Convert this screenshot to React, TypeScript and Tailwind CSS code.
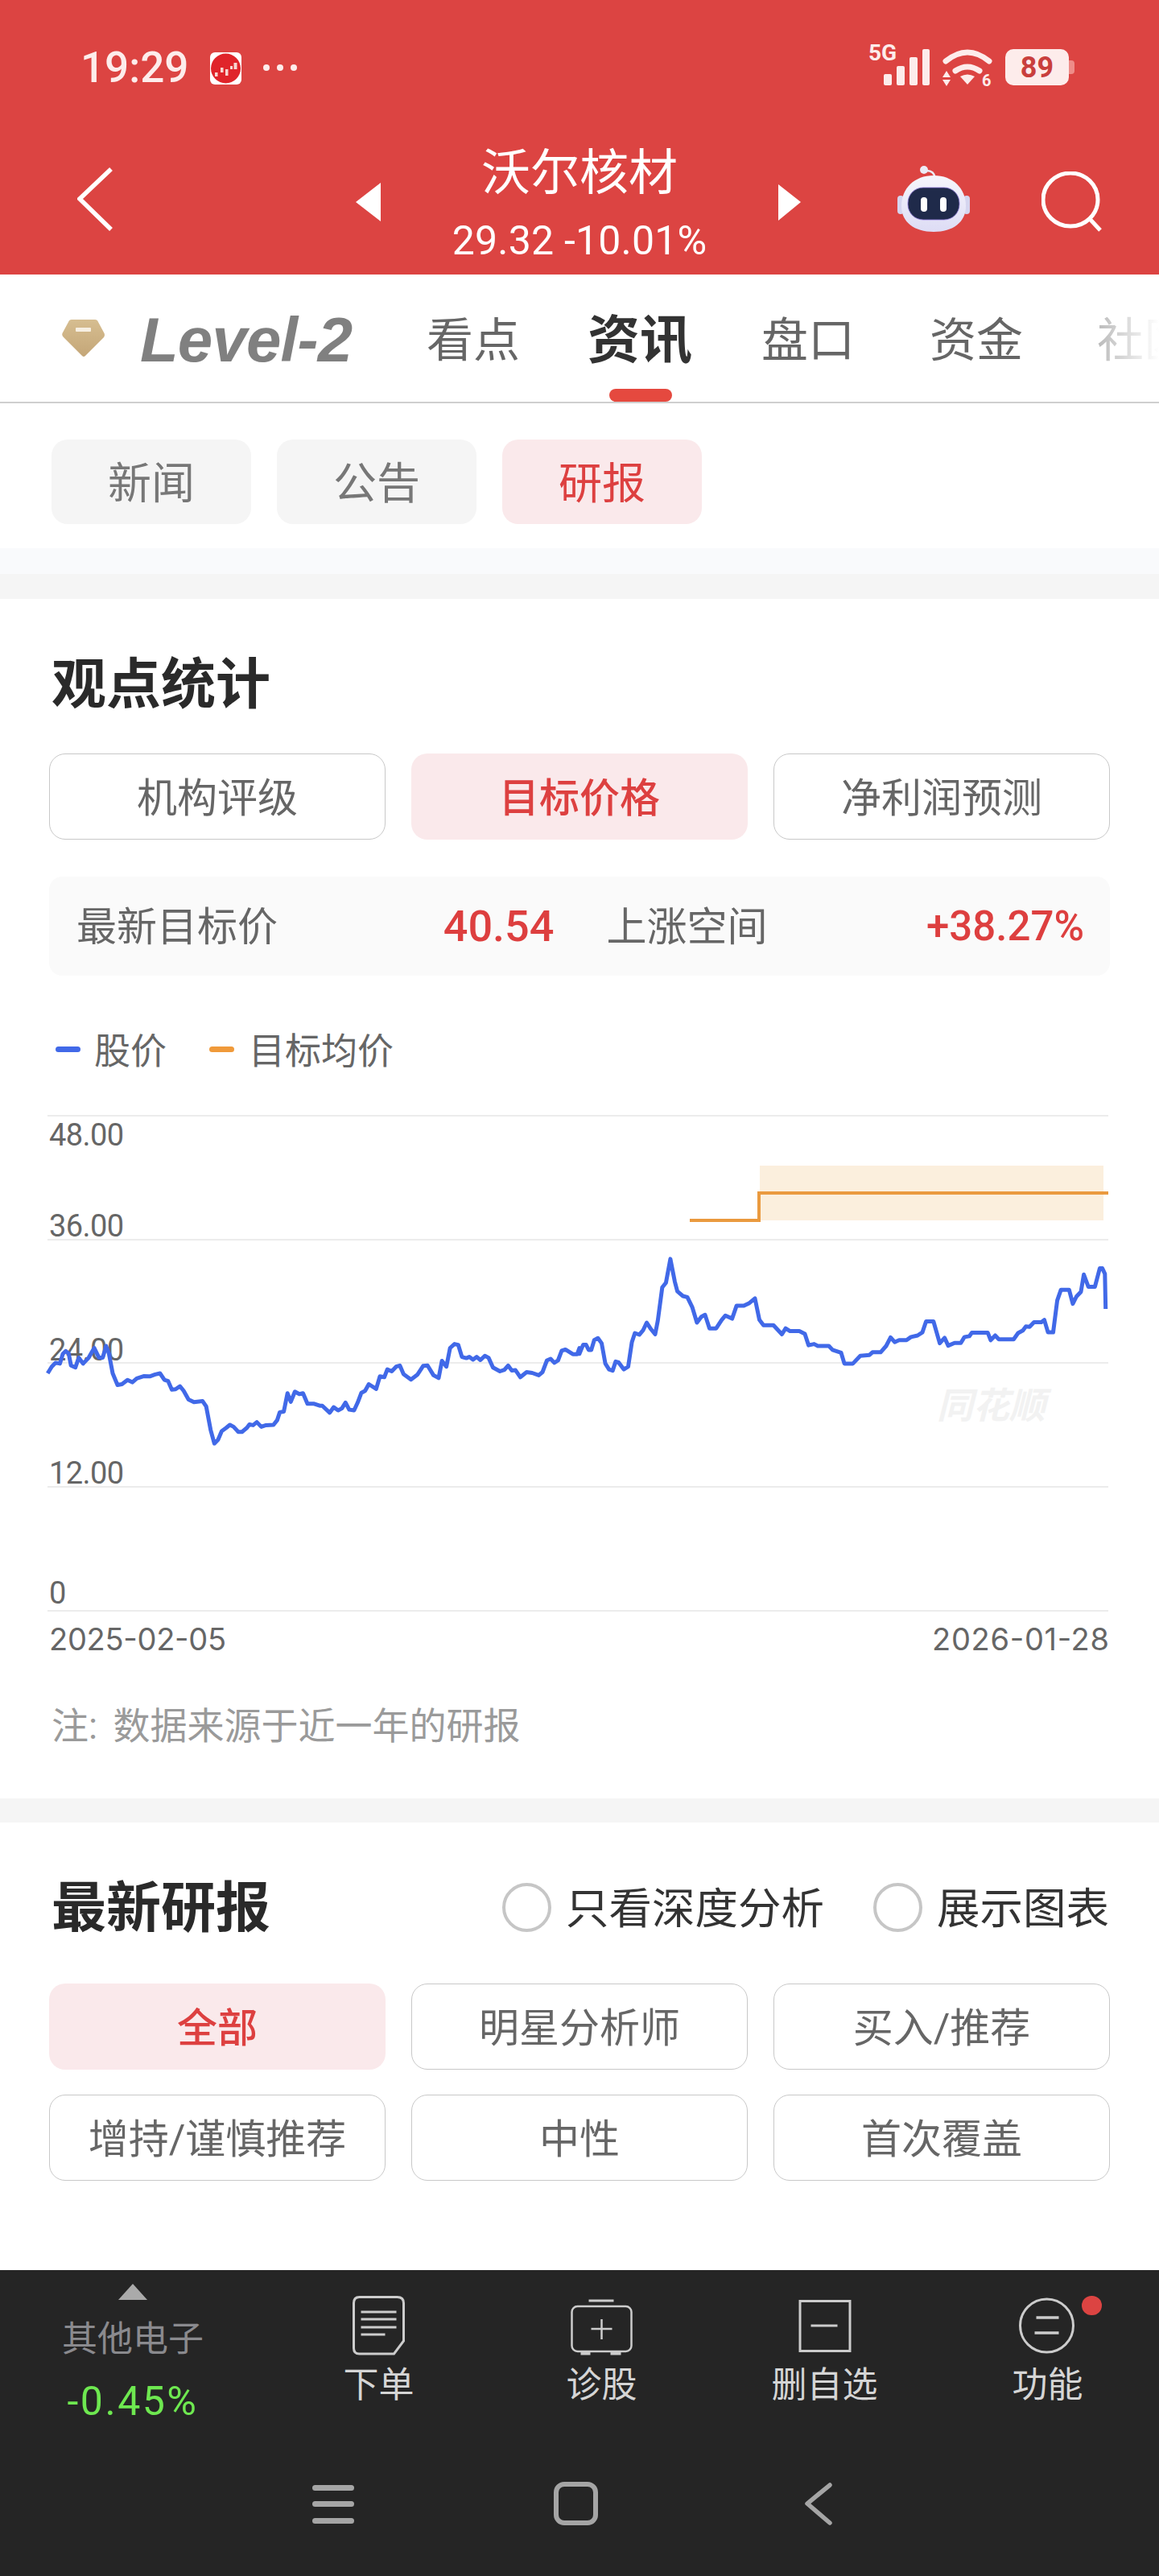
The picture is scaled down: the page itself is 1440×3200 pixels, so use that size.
import React from "react";

const LEFT: number[][] = [[129,755],[140,738],[150,728],[162,730],[170,705],[178,698],[186,705],[192,735],[204,740],[213,715],[225,730],[240,715],[255,690],[268,715],[278,715],[287,685],[295,705],[305,755],[318,785],[330,783],[345,772],[358,778],[370,768],[390,762],[405,763],[420,758],[433,755],[445,772],[455,775],[465,797],[475,796],[487,788],[497,800],[510,822],[525,829],[548,826],[558,840],[570,900],[580,935],[590,925],[600,903],[612,895],[622,887],[632,892],[645,905],[655,905],[668,895],[675,886],[685,888],[695,880],[707,892],[720,888],[740,887],[750,875],[757,855],[768,853],[778,806],[787,828],[798,802],[810,808],[820,806],[832,833],[850,833],[865,838],[872,838],[892,856],[903,842],[915,850],[925,845],[935,830],[945,848],[958,850],[968,830],[978,805],[988,800],[998,783],[1018,795],[1028,763],[1040,765],[1048,745],[1060,750],[1072,738],[1082,735],[1092,757],[1112,771],[1130,758],[1145,736],[1157,735],[1173,760],[1187,767],[1196,723],[1208,738],[1218,690],[1230,680],[1240,682],[1250,713],[1262,716],[1270,713],[1280,720],[1290,713],[1300,721],[1312,710],[1322,715],[1334,740],[1353,750],[1365,746],[1375,735],[1385,748],[1395,747],[1408,765],[1425,752],[1440,754],[1458,760],[1468,752],[1480,722],[1490,718],[1500,728],[1510,722],[1520,697],[1530,694],[1550,706],[1562,706],[1568,690]];
const RIGHT: number[][] = [[0,705],[10,682],[18,682],[25,695],[32,695],[40,670],[50,665],[60,678],[70,730],[80,745],[90,748],[98,725],[106,727],[120,745],[132,738],[142,675],[150,652],[162,656],[172,645],[182,625],[192,640],[205,655],[212,620],[224,535],[234,523],[246,462],[258,520],[265,545],[280,557],[292,560],[305,585],[318,625],[330,610],[340,605],[352,640],[370,640],[385,618],[395,607],[413,615],[425,582],[445,582],[460,575],[475,563],[487,618],[498,632],[525,632],[548,655],[558,640],[570,647],[595,647],[610,654],[620,683],[635,680],[645,685],[675,685],[685,695],[708,702],[717,730],[740,730],[760,710],[785,708],[793,701],[815,701],[830,685],[842,663],[853,675],[865,670],[885,670],[897,662],[915,658],[928,650],[938,622],[958,622],[975,678],[988,664],[998,684],[1015,677],[1032,677],[1042,662],[1055,660],[1062,651],[1105,651],[1113,670],[1125,658],[1135,668],[1175,668],[1187,652],[1200,645],[1208,635],[1218,636],[1230,624],[1250,624],[1258,618],[1268,650],[1282,650],[1293,568],[1303,541],[1325,541],[1335,577],[1345,558],[1357,546],[1365,502],[1377,533],[1395,533],[1408,486],[1415,486],[1422,500],[1424,590]];

const toPx = (x: number, y: number) => `${(x / 2.178).toFixed(1)},${(1340 + y / 2.063).toFixed(1)}`;
const pricePoints = [
  ...LEFT.map(([x, y]) => toPx(x, y)),
  ...RIGHT.map(([x, y]) => toPx(x + 1568, y)),
].join(" ");

function StatusIcons() {
  return (
    <svg viewBox="1075 45 162 66" className="w-[162px] h-[66px] fill-[#fdeceb]">
      <text x="1079" y="75" fontSize="28" fontWeight="700" className="[font-family:Roboto,sans-serif]">5G</text>
      <rect x="1098" y="92" width="10" height="14" rx="2" />
      <rect x="1114" y="82" width="10" height="24" rx="2" />
      <rect x="1130" y="71" width="10" height="35" rx="2" />
      <rect x="1146" y="61" width="9" height="45" rx="2" />
      <path d="M1175 76 Q1202 54 1229 76" fill="none" stroke="#fdeceb" strokeWidth="7" strokeLinecap="round" />
      <path d="M1187 88 Q1202 78 1217 88" fill="none" stroke="#fdeceb" strokeWidth="7" strokeLinecap="round" />
      <path d="M1193 95 Q1202 90 1211 95 L1202 105 Z" />
      <path d="M1176 88 L1181 96 L1171 96 Z" />
      <path d="M1176 107 L1181 99 L1171 99 Z" />
      <text x="1220" y="107" fontSize="20" fontWeight="700" className="[font-family:Roboto,sans-serif]">6</text>
    </svg>
  );
}

function AppIcon() {
  return (
    <svg viewBox="0 0 39 40" className="w-[39px] h-[40px]">
      <rect width="39" height="40" rx="6" fill="#fff" />
      <circle cx="19.5" cy="20" r="18.5" fill="#e0242a" />
      <g fill="#f7d5d0">
        <rect x="6" y="25" width="3.5" height="5" />
        <rect x="13" y="19" width="3.5" height="6" />
        <rect x="19" y="21" width="3.5" height="8" />
        <rect x="25" y="17" width="3" height="4" />
        <rect x="29.5" y="13" width="4" height="8" />
      </g>
    </svg>
  );
}

function Robot() {
  return (
    <svg viewBox="0 0 120 100" className="w-[120px] h-[100px]">
      <defs>
        <linearGradient id="head" x1="0" y1="0" x2="0" y2="1">
          <stop offset="0" stopColor="#f6f6fc" />
          <stop offset="1" stopColor="#dddcf5" />
        </linearGradient>
      </defs>
      <path d="M50 12 Q60 11 62 21" fill="none" stroke="#ececf6" strokeWidth="2.5" />
      <circle cx="48" cy="11" r="5" fill="#ececf6" />
      <rect x="15" y="43" width="8" height="23" rx="4" fill="#d5d5ef" />
      <rect x="97" y="43" width="8" height="23" rx="4" fill="#d5d5ef" />
      <path d="M60 18 C84 18 100 34 100 56 C100 76 84 88 60 88 C36 88 20 76 20 56 C20 34 36 18 60 18 Z" fill="url(#head)" />
      <rect x="28" y="33" width="64" height="40" rx="19" fill="#1f2a4a" stroke="#8f7ad8" strokeWidth="0.8" />
      <rect x="44" y="45" width="8" height="18" rx="4" fill="#fff" />
      <rect x="68" y="45" width="8" height="18" rx="4" fill="#fff" />
    </svg>
  );
}

function Header() {
  return (
    <header className="bg-[#dc4442] h-[341px] text-white shrink-0">
      <div className="h-[168px] flex items-start">
        <span className="ml-[100px] mt-[58px] text-[53px] leading-none font-medium text-[#fdeceb]">19:29</span>
        <div className="ml-[27px] mt-[65px]"><AppIcon /></div>
        <div className="ml-[27px] mt-[80px] flex gap-[9px]">
          <span className="w-[8px] h-[8px] rounded-full bg-[#fdeceb]" />
          <span className="w-[8px] h-[8px] rounded-full bg-[#fdeceb]" />
          <span className="w-[8px] h-[8px] rounded-full bg-[#fdeceb]" />
        </div>
        <div className="ml-auto mr-[105px] mt-[45px] flex items-start">
          <StatusIcons />
          <div className="ml-[12px] mt-[16px] flex items-center">
            <div className="w-[79px] h-[45px] rounded-[10px] bg-[#fdeceb] flex items-center justify-center text-[36px] leading-none font-bold text-[#c93f3d]">89</div>
            <div className="w-[7px] h-[17px] rounded-r-[4px] bg-[#ee8c88]" />
          </div>
        </div>
      </div>
      <div className="h-[173px] flex items-start">
        <svg viewBox="96 208 44 79" className="ml-[96px] mt-[40px] w-[44px] h-[79px]">
          <polyline points="138,210 99,247 138,285" fill="none" stroke="#fff" strokeWidth="5.5" />
        </svg>
        <svg viewBox="442 227 31 48" className="ml-[302px] mt-[59px] w-[31px] h-[48px] fill-white">
          <polygon points="473,227 442,251 473,275" />
        </svg>
        <div className="w-[494px] mt-[17px] flex flex-col items-center">
          <div className="text-[61px] leading-none">沃尔核材</div>
          <div className="mt-[28px] text-[50px] leading-none tracking-[0.2px]">29.32 -10.01%</div>
        </div>
        <svg viewBox="967 229 28 45" className="mt-[61px] w-[28px] h-[45px] fill-white">
          <polygon points="967,229 995,251 967,274" />
        </svg>
        <div className="ml-[105px] mt-[32px]"><Robot /></div>
        <svg viewBox="1294 213 76 76" className="ml-[74px] mt-[45px] w-[76px] h-[76px]" fill="none" stroke="#fff">
          <ellipse cx="1330" cy="248" rx="34" ry="33" strokeWidth="5" />
          <line x1="1354" y1="272" x2="1367" y2="286" strokeWidth="5" />
        </svg>
      </div>
    </header>
  );
}

function TabBar() {
  return (
    <nav className="relative h-[160px] shrink-0 border-b-[2px] border-[#cfcfcf] flex items-center overflow-hidden whitespace-nowrap">
      <svg viewBox="77 397 53 46" className="ml-[77px] shrink-0 w-[53px] h-[46px]">
        <defs>
          <linearGradient id="gem" x1="0" y1="0" x2="0" y2="1">
            <stop offset="0" stopColor="#d6bd90" />
            <stop offset="1" stopColor="#c4a678" />
          </linearGradient>
        </defs>
        <path d="M89 397 H118 Q121 397 122 400 L129 413 Q131 416 129 419 L106 442 Q104 444 102 442 L79 419 Q76 416 78 413 L85 400 Q86 397 89 397 Z" fill="url(#gem)" />
        <rect x="94" y="407" width="19" height="5" rx="1" fill="#f6efe2" />
      </svg>
      <span className="ml-[44px] mt-[3px] shrink-0 w-[262px] text-[78px] leading-none font-bold italic text-[#808080] tracking-[-0.8px] [font-family:'Liberation_Sans',sans-serif]">Level-2</span>
      <span className="ml-[94px] mt-[6px] shrink-0 text-[58px] leading-none text-[#666666]">看点</span>
      <span className="ml-[84px] mt-[6px] shrink-0 text-[65px] leading-none font-bold text-[#333333]">资讯</span>
      <span className="ml-[86px] mt-[6px] shrink-0 text-[58px] leading-none text-[#666666]">盘口</span>
      <span className="ml-[93px] mt-[6px] shrink-0 text-[58px] leading-none text-[#666666]">资金</span>
      <span className="ml-[92px] mt-[6px] shrink-0 text-[58px] leading-none text-[#888888]">社区</span>
      <div className="absolute right-0 top-0 bottom-0 w-[80px] bg-gradient-to-r from-white/40 to-white" />
      <div className="absolute left-[757px] bottom-0 w-[78px] h-[16px] rounded-full bg-[#e5493f]" />
    </nav>
  );
}

function OutlineButton({ label, active }: { label: string; active?: boolean }) {
  return (
    <div
      className={
        active
          ? "h-[107px] pt-[4px] rounded-[20px] bg-[#fae9eb] text-[#dd4040] text-[50px] leading-none font-medium flex items-center justify-center"
          : "h-[107px] pt-[4px] rounded-[20px] border-[1.5px] border-[#c8c8c8] text-[#666666] text-[50px] leading-none flex items-center justify-center"
      }
    >
      {label}
    </div>
  );
}

function SubTabs() {
  const tabs = [
    { label: "新闻", active: false },
    { label: "公告", active: false },
    { label: "研报", active: true },
  ];
  return (
    <div className="h-[180px] shrink-0 pt-[45px] pl-[64px] flex items-start gap-[32px]">
      {tabs.map((t) => (
        <div
          key={t.label}
          className={
            t.active
              ? "w-[248px] h-[105px] pt-[7px] rounded-[20px] bg-[#fae9eb] text-[#dd4040] text-[54px] leading-none flex items-center justify-center"
              : "w-[248px] h-[105px] pt-[7px] rounded-[20px] bg-[#f5f5f5] text-[#777777] text-[54px] leading-none flex items-center justify-center"
          }
        >
          {t.label}
        </div>
      ))}
    </div>
  );
}

function Chart() {
  const grid = [1386, 1540, 1693, 1847, 2001];
  const labels = [
    { t: "48.00", y: 1423 },
    { t: "36.00", y: 1536 },
    { t: "24.00", y: 1690 },
    { t: "12.00", y: 1843 },
    { t: "0", y: 1992 },
  ];
  return (
    <svg viewBox="0 1360 1440 700" className="block w-[1440px] h-[700px] mt-[32px] [font-family:Roboto,sans-serif]">
      {grid.map((y) => (
        <line key={y} x1="59" x2="1377" y1={y} y2={y} stroke="#ececec" strokeWidth="2" />
      ))}
      {labels.map((l) => (
        <text key={l.t} x="61" y={l.y} fontSize="38" letterSpacing="-0.6" fill="#666666">{l.t}</text>
      ))}
      <text x="1164" y="1762" fontSize="45" fontWeight="700" fontStyle="italic" fill="#f2f2f2" className="[font-family:'Noto_Sans_CJK_SC',sans-serif]">同花顺</text>
      <rect x="944" y="1448" width="427" height="68" fill="#fbefdd" />
      <polyline points="857,1516 943,1516 943,1482 1377,1482" fill="none" stroke="#ea9a3f" strokeWidth="4" />
      <polyline points={pricePoints} fill="none" stroke="#4169e8" strokeWidth="5" strokeLinejoin="round" />
      <g className="[font-family:Inter,sans-serif]" fontSize="38" fill="#666666">
        <text x="61" y="2050" textLength="220">2025-02-05</text>
        <text x="1158" y="2050" textLength="220">2026-01-28</text>
      </g>
    </svg>
  );
}

function Stats() {
  return (
    <section className="bg-white shrink-0 pt-[70px] pb-[62px]">
      <h2 className="pl-[64px] pt-[3px] text-[68px] leading-none font-bold text-[#2a2a2a] h-[68px]">观点统计</h2>
      <div className="mt-[54px] px-[61px] grid grid-cols-3 gap-[32px]">
        <OutlineButton label="机构评级" />
        <OutlineButton label="目标价格" active />
        <OutlineButton label="净利润预测" />
      </div>
      <div className="mx-[61px] mt-[46px] h-[123px] rounded-[16px] bg-[#fafafa] pl-[34px] pr-[32px] grid grid-cols-2 gap-[65px] items-center">
        <div className="flex items-center justify-between">
          <span className="pt-[3px] text-[50px] leading-none text-[#666666]">最新目标价</span>
          <span className="text-[54px] leading-none font-medium text-[#dd3f3f]">40.54</span>
        </div>
        <div className="flex items-center justify-between">
          <span className="pt-[3px] text-[50px] leading-none text-[#666666]">上涨空间</span>
          <span className="text-[51px] leading-none font-medium text-[#dd3f3f]">+38.27%</span>
        </div>
      </div>
      <div className="mt-[66px] h-[50px] pl-[69px] flex items-center">
        <span className="w-[31px] h-[7px] rounded-full bg-[#4169e8]" />
        <span className="ml-[17px] pt-[6px] text-[45px] leading-none text-[#666666]">股价</span>
        <span className="ml-[53px] w-[31px] h-[7px] rounded-full bg-[#f09a3a]" />
        <span className="ml-[18px] pt-[6px] text-[45px] leading-none text-[#666666]">目标均价</span>
      </div>
      <Chart />
      <p className="mt-[52px] pl-[64px] pt-[3px] h-[60px] flex items-center text-[46px] leading-none text-[#9a9a9a] [word-spacing:8px]">注: 数据来源于近一年的研报</p>
    </section>
  );
}

function Radio({ label }: { label: string }) {
  return (
    <div className="flex items-center gap-[18px]">
      <span className="w-[61px] h-[61px] rounded-full border-[4px] border-[#c6c6c6]" />
      <span className="pt-[5px] text-[53.5px] leading-none text-[#333333]">{label}</span>
    </div>
  );
}

function Reports() {
  return (
    <section className="bg-white flex-1 pt-[71px]">
      <div className="h-[68px] pl-[64px] pr-[62px] flex items-center justify-between">
        <h2 className="pt-[3px] text-[68px] leading-none font-bold text-[#2a2a2a]">最新研报</h2>
        <div className="flex items-center gap-[61px]">
          <Radio label="只看深度分析" />
          <Radio label="展示图表" />
        </div>
      </div>
      <div className="mt-[61px] px-[61px] grid grid-cols-3 gap-x-[32px] gap-y-[31px]">
        <OutlineButton label="全部" active />
        <OutlineButton label="明星分析师" />
        <OutlineButton label="买入/推荐" />
        <OutlineButton label="增持/谨慎推荐" />
        <OutlineButton label="中性" />
        <OutlineButton label="首次覆盖" />
      </div>
    </section>
  );
}

function BottomItem({ label, children }: { label: string; children: React.ReactNode }) {
  return (
    <div className="relative pt-[30px] flex flex-col items-center">
      {children}
      <span className="mt-[11px] text-[44px] leading-none text-[#d5d5d5]">{label}</span>
    </div>
  );
}

function BottomBar() {
  return (
    <footer className="h-[380px] shrink-0 bg-[#252525]">
      <div className="h-[260px] grid grid-cols-[332px_repeat(4,277px)]">
        <div className="pr-[2px] pt-[17px] flex flex-col items-center">
          <svg viewBox="0 0 36 20" className="w-[36px] h-[20px] fill-[#aaaaaa]">
            <polygon points="18,0 36,20 0,20" />
          </svg>
          <span className="mt-[27px] text-[44px] leading-none text-[#8a8a8e]">其他电子</span>
          <span className="mt-[30px] text-[50px] leading-none tracking-[2.5px] text-[#6ee850]">-0.45%</span>
        </div>
        <BottomItem label="下单">
          <svg viewBox="420.5 2850 100 80" className="w-[100px] h-[80px]" fill="none" stroke="#cccccc" strokeWidth="3">
            <path d="M446 2853.5 H493 Q501 2853.5 501 2861 V2908 L489 2924 H446 Q439 2924 439 2917 V2861 Q439 2853.5 446 2853.5 Z" />
            <path d="M448 2872 H492 M448 2881 H492 M448 2891 H492 M448 2900 H478" />
          </svg>
        </BottomItem>
        <BottomItem label="诊股">
          <svg viewBox="697.5 2850 100 80" className="w-[100px] h-[80px]" fill="none" stroke="#cccccc" strokeWidth="2.5">
            <path d="M731 2858 H762" strokeWidth="3" />
            <rect x="710" y="2865" width="74" height="56" rx="7" />
            <path d="M747 2881 V2906 M734 2893 H760" />
            <path d="M721 2923 H733 M758 2923 H771" strokeWidth="5" />
          </svg>
        </BottomItem>
        <BottomItem label="删自选">
          <svg viewBox="974.5 2850 100 80" className="w-[100px] h-[80px]" fill="none" stroke="#cccccc" strokeWidth="3">
            <rect x="993.5" y="2858.5" width="62" height="62" />
            <path d="M1007 2889 H1040" />
          </svg>
        </BottomItem>
        <BottomItem label="功能">
          <svg viewBox="1251.5 2850 100 80" className="w-[100px] h-[80px]" fill="none" stroke="#cccccc" strokeWidth="3">
            <ellipse cx="1300" cy="2889" rx="33" ry="33" />
            <path d="M1287 2879 H1315 M1285 2898 H1315" strokeWidth="3.5" />
          </svg>
          <span className="absolute left-[181px] top-[32px] w-[25px] h-[24px] rounded-full bg-[#dc4442]" />
        </BottomItem>
      </div>
      <div className="pl-[388px] flex items-center">
        <svg viewBox="388 3081 52 60" className="w-[52px] h-[60px] fill-[#a5a5a5]">
          <rect x="388" y="3088" width="52" height="7" rx="3.5" />
          <rect x="388" y="3108" width="52" height="7" rx="3.5" />
          <rect x="388" y="3129" width="52" height="7" rx="3.5" />
        </svg>
        <svg viewBox="688 3081 55 60" className="ml-[248px] w-[55px] h-[60px]" fill="none" stroke="#a5a5a5" strokeWidth="6">
          <rect x="691" y="3087" width="49" height="48" rx="10" />
        </svg>
        <svg viewBox="1000 3081 34 60" className="ml-[257px] w-[34px] h-[60px]" fill="none" stroke="#a5a5a5" strokeWidth="5.5" strokeLinecap="round" strokeLinejoin="round">
          <polyline points="1031,3088 1003,3111 1031,3135" />
        </svg>
      </div>
    </footer>
  );
}

export default function App() {
  return (
    <div className="w-[1440px] h-[3200px] overflow-hidden flex flex-col bg-white [font-family:Roboto,'Noto_Sans_CJK_SC',sans-serif]">
      <Header />
      <TabBar />
      <SubTabs />
      <div className="h-[32px] shrink-0 bg-[#f9fafc]" />
      <div className="h-[31px] shrink-0 bg-[#f5f5f5]" />
      <Stats />
      <div className="h-[30px] shrink-0 bg-[#f5f5f5]" />
      <Reports />
      <BottomBar />
    </div>
  );
}
